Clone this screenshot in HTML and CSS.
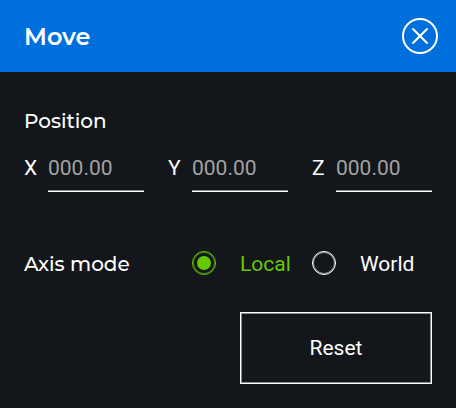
FILE: index.html
```html
<!DOCTYPE html>
<html lang="en">
<head>
<meta charset="utf-8">
<meta name="viewport" content="width=device-width, initial-scale=1">
<title>Move</title>
<link rel="stylesheet" href="styles.css">
</head>
<body>
<main class="panel">
  <header class="panel-header">
    <h1 class="panel-title">Move</h1>
    <button class="close" type="button" aria-label="Close">
      <svg viewBox="0 0 36 36" width="36" height="36" fill="none" stroke="currentColor" stroke-width="2" stroke-linecap="round" aria-hidden="true">
        <circle cx="18" cy="18" r="17"/>
        <path d="M11 11 25 25M25 11 11 25"/>
      </svg>
    </button>
  </header>
  <form class="panel-body">
    <h2 class="heading" id="position">Position</h2>
    <div class="axes" role="group" aria-labelledby="position">
      <label class="axis"><span>X</span><input class="axis-input" type="text" placeholder="000.00"></label>
      <label class="axis"><span>Y</span><input class="axis-input" type="text" placeholder="000.00"></label>
      <label class="axis"><span>Z</span><input class="axis-input" type="text" placeholder="000.00"></label>
    </div>
    <div class="mode" role="radiogroup" aria-labelledby="axis-mode">
      <h2 class="heading" id="axis-mode">Axis mode</h2>
      <label class="option"><input class="radio" type="radio" name="mode" checked><span>Local</span></label>
      <label class="option"><input class="radio" type="radio" name="mode"><span>World</span></label>
    </div>
    <button class="reset" type="reset">Reset</button>
  </form>
</main>
</body>
</html>
```
FILE: styles.css
```css
* {
  box-sizing: border-box;
}

body {
  margin: 0;
  background: #13161b;
  color: #fff;
  font: 21px/26px Roboto, sans-serif;
}

.panel-header {
  display: flex;
  align-items: center;
  justify-content: space-between;
  height: 72px;
  padding: 0 18px 0 24px;
  background: #006fde;
}

.panel-title,
.heading {
  margin: 0;
  font-family: Montserrat, Inter, sans-serif;
}

.panel-title {
  padding-top: 2px;
  font-size: 24px;
  font-weight: 600;
  line-height: 28px;
}

.heading {
  font-size: 20px;
  font-weight: 500;
}

.close {
  padding: 0;
  border: 0;
  background: none;
  color: #fff;
}

.close svg {
  display: block;
}

.panel-body {
  display: flex;
  flex-direction: column;
  padding: 36px 24px 24px;
}

.axes {
  display: grid;
  grid-template-columns: repeat(3, 1fr);
  gap: 24px;
  margin-top: 10px;
}

.axis {
  display: grid;
  grid-template-columns: 24px 1fr;
  align-items: center;
}

.axis-input {
  width: 100%;
  height: 48px;
  padding: 0;
  border: 0;
  border-bottom: 1px solid #fff;
  box-shadow: inset 0 -1px #898b8d;
  background: none;
  color: #fff;
  font: inherit;
}

.axis-input::placeholder {
  color: #a1a2a4;
  opacity: 1;
}

.mode {
  display: grid;
  grid-template-columns: 7fr 5fr 5fr;
  align-items: center;
  height: 48px;
  margin-top: 48px;
}

.option {
  display: flex;
  align-items: flex-start;
  gap: 24px;
}

.option:has(:checked) {
  color: #66c800;
}

.radio {
  appearance: none;
  flex: none;
  display: grid;
  place-items: center;
  width: 24px;
  height: 24px;
  margin: 0;
  border: 1px solid currentColor;
  border-radius: 50%;
  box-shadow: inset 0 0 0 1px rgb(255 255 255 / 50%);
  color: inherit;
}

.radio:checked {
  box-shadow: inset 0 0 0 1px rgb(102 200 0 / 50%);
}

.radio:checked::before {
  content: "";
  width: 14px;
  height: 14px;
  border-radius: 50%;
  background: currentColor;
}

.reset {
  align-self: flex-end;
  width: 192px;
  height: 72px;
  margin-top: 24px;
  border: 1px solid #fff;
  box-shadow: inset 0 0 0 1px #898b8d;
  background: none;
  color: #fff;
  font: inherit;
}
```
